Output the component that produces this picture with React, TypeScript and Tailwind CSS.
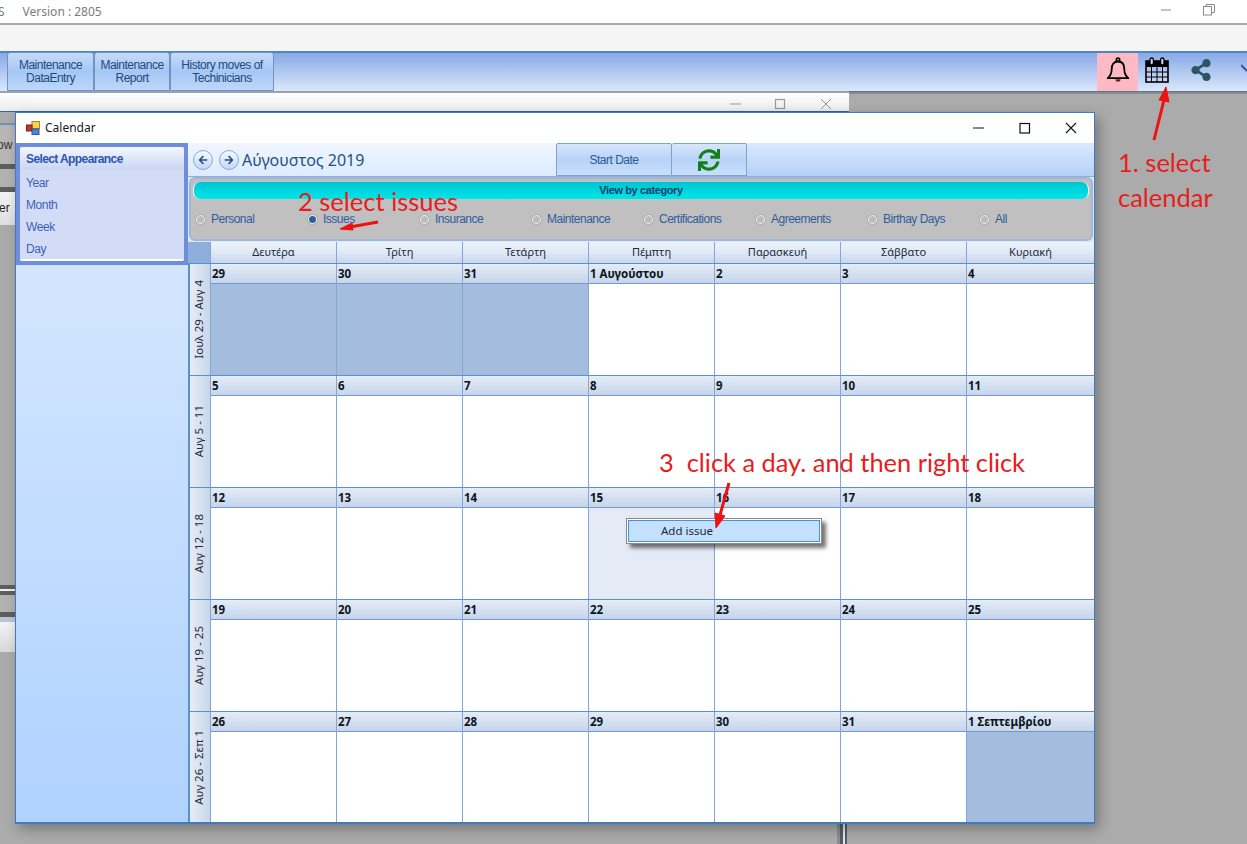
import React from "react";
import { FaSync, FaShareAlt, FaArrowLeft, FaArrowRight } from "react-icons/fa";

const weeks = [
  { label: "Ιουλ 29 - Αυγ 4", days: ["29", "30", "31", "1 Αυγούστου", "2", "3", "4"] },
  { label: "Αυγ 5 - 11", days: ["5", "6", "7", "8", "9", "10", "11"] },
  { label: "Αυγ 12 - 18", days: ["12", "13", "14", "15", "16", "17", "18"] },
  { label: "Αυγ 19 - 25", days: ["19", "20", "21", "22", "23", "24", "25"] },
  { label: "Αυγ 26 - Σεπ 1", days: ["26", "27", "28", "29", "30", "31", "1 Σεπτεμβρίου"] },
];
const dayNames = ["Δευτέρα", "Τρίτη", "Τετάρτη", "Πέμπτη", "Παρασκευή", "Σάββατο", "Κυριακή"];
const categories = ["Personal", "Issues", "Insurance", "Maintenance", "Certifications", "Agreements", "Birthay Days", "All"];

function ToolButton({ w, a, b }: { w: string; a: string; b: string }) {
  return (
    <div className={`${w} h-[39px] flex flex-col items-center justify-center rounded-t-[3px] border border-[#6f94c4] bg-gradient-to-b from-[#c6dbf8] via-[#a5c7f4] to-[#bdd7f9] text-[12px] leading-[13px] tracking-[-0.5px] text-[#1d4a7c] font-['Liberation_Sans',sans-serif]`}>
      <span>{a}</span>
      <span>{b}</span>
    </div>
  );
}

function BellIcon() {
  return (
    <svg width="24" height="26" viewBox="0 0 24 26">
      <circle cx="12" cy="2.800" r="1.700" fill="none" stroke="#000" strokeWidth="1.600" />
      <path d="M12 4.500c-4.200 0-6.300 3-6.300 7.500 0 4.500-1.500 7-4 9.200h20.600c-2.500-2.200-4-4.700-4-9.200 0-4.500-2.100-7.500-6.300-7.500z" fill="none" stroke="#000" strokeWidth="1.800" strokeLinejoin="round" />
      <path d="M9.500 22.300a2.500 2.500 0 0 0 5 0z" fill="#7a1c1c" />
    </svg>
  );
}

function CalendarIcon() {
  return (
    <svg width="24" height="26" viewBox="0 0 24 26" className="text-black">
      <rect x="1" y="4" width="22" height="21" fill="none" stroke="currentColor" strokeWidth="1.600" />
      <rect x="1" y="4" width="22" height="6" fill="currentColor" />
      <rect x="5" y="1" width="3.400" height="7" rx="1.700" fill="#c8d9f5" stroke="currentColor" strokeWidth="1.300" />
      <rect x="15.600" y="1" width="3.400" height="7" rx="1.700" fill="#c8d9f5" stroke="currentColor" strokeWidth="1.300" />
      <path d="M1 15h22M1 20h22M6.500 10v15M12 10v15M17.500 10v15" stroke="currentColor" strokeWidth="1" fill="none" />
    </svg>
  );
}

function CircleArrow({ right }: { right?: boolean }) {
  return (
    <div className="w-[20px] h-[20px] rounded-full border border-[#8aa7d4] bg-gradient-to-b from-[#f5f9ff] to-[#c4d8f5] flex items-center justify-center text-[#1f4e8c] text-[10px]">
      {right ? <FaArrowRight /> : <FaArrowLeft />}
    </div>
  );
}

function Radio({ label, on }: { label: string; on?: boolean }) {
  return (
    <div className="w-[112px] flex items-center gap-[5px] shrink-0">
      <span className={`w-[11px] h-[11px] rounded-full border border-[#a5a5a5] flex items-center justify-center ${on ? "bg-[#e8eef8]" : "bg-[#ececec]"}`}>
        <span className={`w-[7px] h-[7px] rounded-full ${on ? "bg-[#2f5f95]" : "bg-[#bcbcbc]"}`} />
      </span>
      <span className="text-[12px] tracking-[-0.5px] text-[#2f5d9c] font-['Liberation_Sans',sans-serif]">{label}</span>
    </div>
  );
}

function Sidebar() {
  return (
    <div className="w-[172px] shrink-0 flex flex-col bg-gradient-to-b from-[#dbeaff] to-[#afd2ff]">
      <div className="bg-[#6d8fdb] px-[4px] pt-[4px] h-[122px]">
        <div className="h-[114px] rounded-[2px] bg-[#d3dcf6] border-b-2 border-white overflow-hidden">
          <div className="h-[23px] flex items-center pl-[6px] bg-gradient-to-b from-[#f4f7fe] to-[#c9d5f3] text-[12px] font-bold tracking-[-0.6px] text-[#2b55b0] font-['Liberation_Sans',sans-serif]">
            Select Appearance
          </div>
          <div className="flex flex-col pl-[6px] pt-[2px] text-[12px] text-[#3a62b8] tracking-[-0.4px] font-['Liberation_Sans',sans-serif]">
            {["Year", "Month", "Week", "Day"].map((t) => (
              <div key={t} className="h-[22px] flex items-center">{t}</div>
            ))}
          </div>
        </div>
      </div>
    </div>
  );
}

function CalendarGrid() {
  return (
    <div className="flex-1 flex flex-col font-['Noto_Sans',sans-serif]">
      <div className="flex h-[21px]">
        <div className="w-[22px] bg-[#8eaedb] shrink-0" />
        {dayNames.map((d, i) => (
          <div key={d} className={`${i === 6 ? "w-[128px]" : "w-[126px]"} border-l border-[#84a6d6] bg-gradient-to-b from-[#edf3fb] via-[#dfe8f5] to-[#c8d7ec] flex items-center justify-center text-[11px] text-[#1b2a3c]`}>
            {d}
          </div>
        ))}
      </div>
      {weeks.map((w, wi) => (
        <div key={w.label} className={`flex ${wi === 4 ? "h-[111px]" : "h-[112px]"} border-t border-[#5f8fc9]`}>
          <div className="w-[22px] shrink-0 border-l-2 border-[#5f8fc9] bg-gradient-to-r from-[#e7edf6] to-[#c8d6ea] flex items-center justify-center">
            <span className="[writing-mode:vertical-rl] rotate-180 text-[11.5px] text-[#1b2a3c] whitespace-nowrap -ml-[2px]">{w.label}</span>
          </div>
          {w.days.map((d, i) => {
            const shaded = (wi === 0 && i < 3) || (wi === 4 && i === 6);
            const selected = wi === 2 && i === 3;
            return (
              <div key={i} className={`${i === 6 ? "w-[128px]" : "w-[126px]"} flex flex-col border-l border-[#84a6d6]`}>
                <div className="h-[20px] shrink-0 border-b border-[#6f9bd0] bg-gradient-to-b from-[#e4ecf7] to-[#c6d5ea] pl-[1px] leading-[19px] font-bold text-[#0c1420] text-[11.5px]">
                  {d}
                </div>
                <div className={`flex-1 ${shaded ? "bg-[#a4bddf]" : selected ? "bg-[#e5ebf6]" : "bg-white"}`} />
              </div>
            );
          })}
        </div>
      ))}
    </div>
  );
}

function CalendarWindow() {
  return (
    <div className="absolute left-[15px] top-[112px] w-[1080px] h-[712px] flex flex-col border border-[#3f7cbf] border-b-2 bg-white shadow-[4px_5px_12px_rgba(0,0,0,0.3)]">
      <div className="h-[30px] shrink-0 flex items-center bg-white">
        <svg width="14" height="14" viewBox="0 0 14 14" className="ml-[10px]">
          <rect x="6" y="0.500" width="7.500" height="7" fill="#f4d24a" stroke="#a88a20" />
          <rect x="0.500" y="4" width="5.500" height="6" fill="#c8342c" stroke="#7a2018" />
          <rect x="6" y="8" width="7" height="5.500" fill="#4b86d8" stroke="#2a5a9c" />
        </svg>
        <span className="ml-[5px] text-[12px] text-[#1a1a1a] font-['Noto_Sans',sans-serif]">Calendar</span>
        <div className="ml-auto flex items-center text-black">
          <svg width="46" height="14" viewBox="0 0 46 14"><path d="M17 7h11" stroke="#111" strokeWidth="1" /></svg>
          <svg width="46" height="14" viewBox="0 0 46 14"><rect x="18" y="2.500" width="9.500" height="9.500" fill="none" stroke="#111" strokeWidth="1.200" /></svg>
          <svg width="46" height="14" viewBox="0 0 46 14"><path d="M18 2l10 10M28 2l-10 10" stroke="#111" strokeWidth="1.100" /></svg>
        </div>
      </div>
      <div className="flex-1 flex min-h-0">
        <Sidebar />
        <div className="flex-1 flex flex-col min-w-0">
          <div className="h-[33px] shrink-0 flex items-stretch bg-gradient-to-b from-[#f1f6ff] to-[#dcebff]">
            <div className="w-[368px] flex items-center pl-[5px] gap-[6px]">
              <CircleArrow />
              <CircleArrow right />
              <span className="-ml-[3px] text-[16px] text-[#24527f] font-['Noto_Sans',sans-serif]">Αύγουστος 2019</span>
            </div>
            <div className="w-[116px] border border-[#7ea2d2] rounded-t-[2px] bg-gradient-to-b from-[#d7e6fb] via-[#b8d3f8] to-[#c9dffb] flex items-center justify-center text-[12px] tracking-[-0.5px] text-[#285a94] font-['Liberation_Sans',sans-serif]">
              Start Date
            </div>
            <div className="w-[75px] border border-l-0 border-[#7ea2d2] rounded-t-[2px] bg-gradient-to-b from-[#d7e6fb] via-[#b8d3f8] to-[#c9dffb] flex items-center justify-center text-[22px] text-[#118017]">
              <FaSync />
            </div>
            <div className="flex-1 bg-gradient-to-b from-[#dbe9fd] to-[#b5d1f8]" />
          </div>
          <div className="h-[66px] shrink-0 bg-[#dce8f8] px-[1px] border-t border-[#8fb0dc]">
            <div className="h-[64px] rounded-[6px] border-2 border-[#9fb7d9] bg-[#c0c0c0] flex flex-col px-[2px] pt-[3px]">
              <div className="h-[17px] shrink-0 rounded-[7px] bg-gradient-to-b from-[#00c4d6] to-[#00e6e6] border-x border-white flex items-center justify-center text-[11px] font-bold tracking-[-0.4px] text-[#0f3f6e] font-['Liberation_Sans',sans-serif]">
                View by category
              </div>
              <div className="flex items-center mt-[11px] pl-[2px]">
                {categories.map((c) => (
                  <Radio key={c} label={c} on={c === "Issues"} />
                ))}
              </div>
            </div>
          </div>
          <CalendarGrid />
        </div>
      </div>
    </div>
  );
}

function BackLayer() {
  return (
    <>
      <div className="absolute left-0 top-[91px] w-[849px] h-[21px] border-t-2 border-[#9aa3ad] border-b border-b-[#2a6a9c] bg-gradient-to-b from-white to-[#ececec] flex items-center justify-end">
        <svg width="131" height="18" viewBox="0 0 131 18" className="mt-[6px]">
          <path d="M12 8h11" stroke="#999" strokeWidth="1" />
          <rect x="57.500" y="3.500" width="9" height="9" fill="none" stroke="#999" strokeWidth="1.200" />
          <path d="M103 3l10 10M113 3l-10 10" stroke="#999" strokeWidth="1" />
        </svg>
      </div>
      <div className="absolute left-0 top-[123px] w-[15px] h-[102px] flex flex-col bg-[#b8b6b4] border-t-2 border-[#6f93bd] overflow-hidden font-['Liberation_Sans',sans-serif]">
        <div className="h-[39px] flex items-center text-[12px] text-[#333] whitespace-nowrap"><span className="-ml-[3px]">ow t</span></div>
        <div className="h-[5px] bg-[#5e5e5e]" />
        <div className="h-[18px] bg-[#b4b2b0]" />
        <div className="h-[5px] bg-[#5e5e5e]" />
        <div className="flex-1 bg-gradient-to-b from-[#f4f4f4] to-[#dedede] flex items-center text-[12px] text-[#222] whitespace-nowrap"><span className="-ml-[1px] -mt-[2px]">er</span></div>
      </div>
      <div className="absolute left-0 top-[585px] w-[15px] flex flex-col">
        <div className="h-[4px] bg-[#5e5e5e]" />
        <div className="h-[2px] bg-[#eee]" />
        <div className="h-[4px] bg-[#5e5e5e]" />
        <div className="h-[17px] bg-[#b4b2b0]" />
        <div className="h-[5px] bg-[#5e5e5e]" />
        <div className="h-[5px] bg-[#b8c6d8]" />
        <div className="h-[30px] bg-gradient-to-b from-[#f4f4f4] to-[#d8d8d8]" />
      </div>
      <div className="absolute left-[837px] top-[824px] h-[20px] flex">
        <div className="w-[3px] bg-[#8d8d8d]" />
        <div className="w-[3px] bg-[#555c66]" />
        <div className="w-[2px] bg-[#dfe6f0]" />
        <div className="w-[2px] bg-[#555c66]" />
      </div>
    </>
  );
}

function Annotations() {
  return (
    <>
      <svg className="absolute left-0 top-0 pointer-events-none" width="1247" height="844" viewBox="0 0 1247 844">
        <g fill="#ee1111" stroke="#ee1111">
          <path d="M1154 140L1164 100" strokeWidth="3" fill="none" />
          <path d="M1166 87L1159 100L1169 102Z" strokeWidth="1" />
          <path d="M378 222L350 227" strokeWidth="3" fill="none" />
          <path d="M340 229L352 223L353 230Z" strokeWidth="1" />
          <path d="M729 483L720 515" strokeWidth="3" fill="none" />
          <path d="M716 528L715 513L725 516Z" strokeWidth="1" />
        </g>
      </svg>
      <div className="absolute left-[1118px] top-[145px] text-[25.500px] leading-[35px] text-[#e81c1c] font-['Lato',sans-serif]">
        1. select
        <br />
        calendar
      </div>
      <div className="absolute left-[298px] top-[185px] text-[25.500px] leading-[32px] text-[#e81c1c] whitespace-nowrap font-['Lato',sans-serif]">2 select issues</div>
      <div className="absolute left-[659px] top-[446px] text-[25.400px] leading-[32px] text-[#e81c1c] whitespace-pre font-['Lato',sans-serif]">3  click a day. and then right click</div>
    </>
  );
}

export default function App() {
  return (
    <div className="relative w-[1247px] h-[844px] overflow-hidden bg-[#ababab]">
      <div className="h-[25px] bg-white border-b-2 border-[#a9a9a9] flex items-center text-[12px] text-[#7b7b7b] font-['Noto_Sans',sans-serif]">
        <span className="-ml-[2px]">S</span>
        <span className="ml-[18px]">Version : 2805</span>
        <div className="ml-auto flex items-center gap-[31px] mr-[32px] -mt-[4px]">
          <svg width="12" height="12" viewBox="0 0 12 12"><path d="M1 6h10" stroke="#8a8a8a" strokeWidth="1" /></svg>
          <svg width="12" height="12" viewBox="0 0 12 12" fill="none" stroke="#8a8a8a"><rect x="0.500" y="2.500" width="8" height="8.500" /><path d="M3 2.500V0.500h8.500v8H8.500" /></svg>
        </div>
      </div>
      <div className="h-[26px] bg-[#f5f5f5]" />
      <div className="h-[41px] border-t-2 border-[#4f83c2] border-b border-b-[#5d7590] bg-gradient-to-b from-[#88a9e6] to-[#dbe8fb] flex items-stretch">
        <div className="ml-[7px] flex items-end">
          <ToolButton w="w-[87px]" a="Maintenance" b="DataEntry" />
          <ToolButton w="w-[76px]" a="Maintenance" b="Report" />
          <ToolButton w="w-[104px]" a="History moves of" b="Techinicians" />
        </div>
        <div className="ml-auto flex items-stretch">
          <div className="w-[41px] bg-[#fdb9c4] flex items-center justify-center pb-[4px]">
            <BellIcon />
          </div>
          <div className="w-[38px] flex items-center justify-center pb-[5px]"><CalendarIcon /></div>
          <div className="w-[50px] flex items-center justify-center pb-[5px] text-[22px] text-[#2b5560]"><FaShareAlt /></div>
          <div className="w-[21px] flex items-center justify-end overflow-hidden">
            <svg width="6" height="12" viewBox="0 0 6 12" className="-mt-[8px]"><path d="M0 3l6 6" stroke="#3b4fa8" strokeWidth="2" fill="none" /></svg>
          </div>
        </div>
      </div>
      <div className="h-[2px] bg-[#8c8c8c]" />
      <BackLayer />
      <CalendarWindow />
      <div className="absolute left-[626px] top-[518px] w-[196px] h-[26px] border border-[#8a8a8a] bg-white p-[1px] shadow-[4px_4px_4px_rgba(0,0,0,0.55)]">
        <div className="h-full border border-[#4c90dc] bg-[#c3e0ff] pl-[32px] flex items-center text-[11.500px] text-[#1c2a3a] font-['Noto_Sans',sans-serif]">Add issue</div>
      </div>
      <Annotations />
    </div>
  );
}
